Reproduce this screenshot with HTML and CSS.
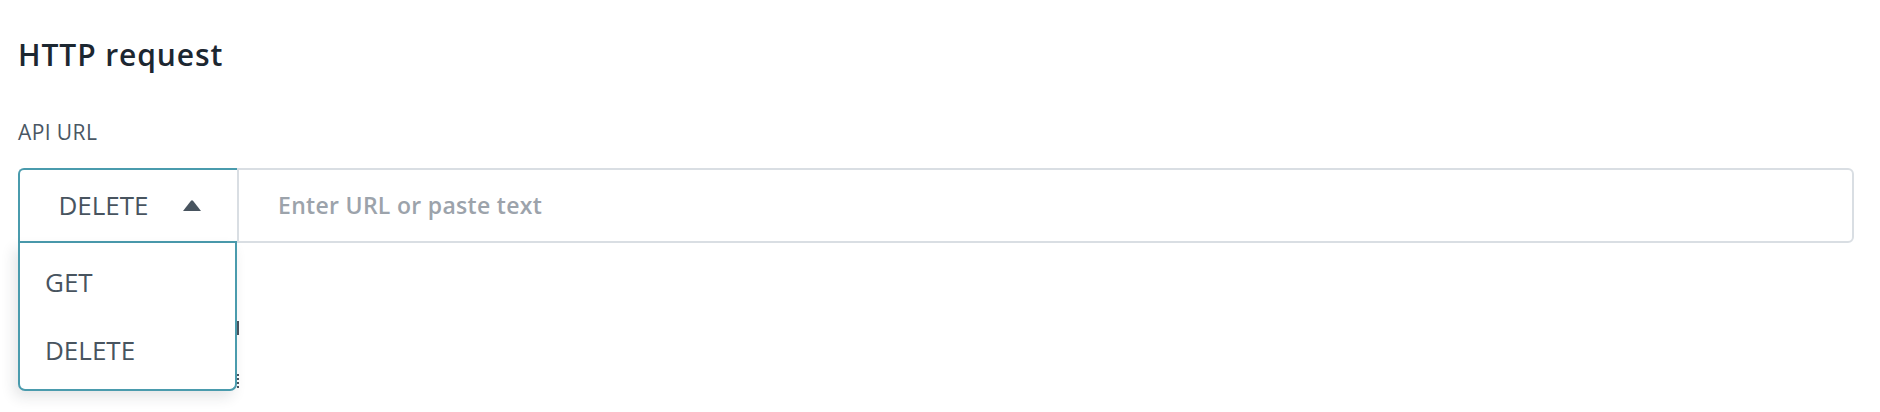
FILE: index.html
```html
<!DOCTYPE html>
<html lang="en">
<head>
<meta charset="utf-8">
<title>HTTP request</title>
<link rel="stylesheet" href="styles.css">
</head>
<body>
<main class="page">
  <h1 class="title">HTTP request</h1>
  <label class="field-label" for="url">API URL</label>
  <div class="url-group">
    <div class="method">
      <button class="method-btn" type="button">
        <span class="method-value">DELETE</span>
        <svg class="caret" width="18" height="11" viewBox="0 0 18 11" aria-hidden="true"><path d="M8 0.8 Q9 -0.2 10 0.8 L18 11 H0 Z" fill="#48545f"/></svg>
      </button>
      <ul class="method-menu">
        <li class="method-option">GET</li>
        <li class="method-option">DELETE</li>
      </ul>
    </div>
    <input id="url" class="url-input" type="text" placeholder="Enter URL or paste text">
  </div>
  <div class="below">
    <span class="peek-bar"></span>
    <span class="peek-dots"></span>
  </div>
</main>
</body>
</html>
```

FILE: styles.css
```css
* { box-sizing: border-box; }

body {
  margin: 0;
  background: #ffffff;
  font-family: "Open Sans", "Liberation Sans", sans-serif;
}

.page {
  min-height: 412px;
  padding: 35px 26px 0 18px;
}

.title {
  margin: 0;
  font-size: 30px;
  line-height: 40px;
  font-weight: 600;
  letter-spacing: 0.9px;
  color: #1c2731;
}

.field-label {
  display: block;
  margin: 44px 0 0 0;
  font-size: 21px;
  line-height: 26px;
  font-weight: 400;
  letter-spacing: 0.4px;
  color: #4a5764;
}

.url-group {
  display: flex;
  margin-top: 23px;
  height: 75px;
}

.method {
  position: relative;
  width: 219px;
  flex: none;
  z-index: 2;
}

.method-btn {
  width: 100%;
  height: 100%;
  display: flex;
  align-items: center;
  justify-content: center;
  gap: 34px;
  padding: 0 0 2px 2px;
  background: #ffffff;
  border: 2px solid #4a9bad;
  border-right: none;
  border-radius: 6px 0 0 0;
  font-family: "Open Sans", "Liberation Sans", sans-serif;
  font-size: 26px;
  font-weight: 400;
  color: #48545f;
  cursor: pointer;
}

.caret {
  display: block;
  margin-top: 1px;
}

.method-menu {
  position: absolute;
  top: 75px;
  left: 0;
  width: 219px;
  height: 148px;
  margin: 0;
  padding: 5px 0 0 25px;
  list-style: none;
  background: #ffffff;
  border: 2px solid #4a9bad;
  border-top: none;
  border-radius: 0 0 7px 7px;
  box-shadow: -4px 6px 14px rgba(30, 40, 50, 0.12);
}

.method-option {
  height: 68px;
  line-height: 68px;
  font-size: 26px;
  font-weight: 500;
  color: #48545f;
}

.url-input {
  flex: 1;
  min-width: 0;
  height: 100%;
  margin: 0;
  padding: 0 0 2px 39px;
  border: 2px solid #d9dee3;
  border-radius: 0 6px 6px 0;
  background: #ffffff;
  font-family: "Open Sans", "Liberation Sans", sans-serif;
  font-size: 23px;
  font-weight: 600;
  letter-spacing: 0.3px;
  color: #1c2731;
  outline: none;
}

.url-input::placeholder {
  color: #9ca3ab;
}

.below {
  display: flex;
  flex-direction: column;
  margin-left: 219px;
}

.peek-bar {
  display: block;
  width: 2px;
  height: 14px;
  margin-top: 78px;
  background: #4a5560;
}

.peek-dots {
  display: block;
  width: 2px;
  height: 14px;
  margin-top: 39px;
  border-left: 2px dotted #4a5560;
}
```
